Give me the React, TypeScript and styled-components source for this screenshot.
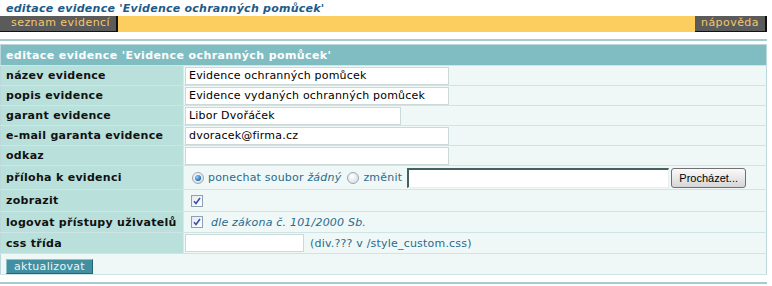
import React from 'react';
import styled, { createGlobalStyle } from 'styled-components';

const Global = createGlobalStyle`
  body {
    margin: 0;
    background: #fff;
    font-family: "DejaVu Sans", Verdana, sans-serif;
    font-size: 11px;
    letter-spacing: 0.2px;
  }
`;

const Page = styled.div`
  width: 767px;
`;

const PageTitle = styled.h1`
  margin: 0;
  height: 16px;
  padding: 2px 0 0 6px;
  box-sizing: border-box;
  font-size: 11px;
  line-height: 13px;
  font-weight: bold;
  font-style: italic;
  letter-spacing: 0.25px;
  color: #1c5a8a;
`;

const Toolbar = styled.div`
  display: flex;
  justify-content: space-between;
  height: 16px;
  background: #fccd5f;
`;

const ToolButton = styled.a<{ $pl?: number }>`
  display: block;
  box-sizing: border-box;
  height: 16px;
  padding: 0 6px 0 ${p => p.$pl ?? 6}px;
  background: #5b5b5b;
  color: #f3c86c;
  line-height: 14px;
  letter-spacing: 0.45px;
  border-right: 2px solid #111;
  border-bottom: 1px solid #111;
  cursor: pointer;
`;

const Rule = styled.div<{ $top: number }>`
  margin-top: ${p => p.$top}px;
  height: 2px;
  background: #a6ccd2;
`;

const Form = styled.table`
  margin-top: 3px;
  width: 767px;
  border-collapse: collapse;
  border: 1px solid #bcd7d9;
  table-layout: fixed;
`;

const HeadCell = styled.th`
  height: 20px;
  padding: 0 5px;
  background: #80bdc3;
  color: #fff;
  font-size: 11px;
  font-weight: bold;
  letter-spacing: 0.4px;
  text-align: left;
  border-bottom: 1px solid #cfe4e4;
`;

const Row = styled.tr<{ $h: number }>`
  height: ${p => p.$h}px;
`;

const Label = styled.td`
  width: 172px;
  padding: 0 5px;
  background: #bae0db;
  color: #111;
  font-weight: bold;
  letter-spacing: 0.3px;
  white-space: nowrap;
  border-bottom: 1px solid #cfe4e4;
  border-right: 1px solid #d6e9e8;
`;

const Value = styled.td<{ $pt?: number }>`
  padding: ${p => p.$pt ?? 0}px 0 0 1px;
  background: #eff8f6;
  color: #2a6b8e;
  border-bottom: 1px solid #cfe4e4;
  white-space: nowrap;
`;

const Field = styled.div`
  display: flex;
  align-items: center;
`;

const TextInput = styled.input<{ $w: number }>`
  box-sizing: border-box;
  width: ${p => p.$w}px;
  height: 18px;
  margin: 0;
  padding: 0 3px;
  border: 1px solid #cbd9d9;
  background: #fff;
  font-family: "DejaVu Sans", Verdana, sans-serif;
  font-size: 11px;
  letter-spacing: 0.2px;
  color: #000;
  outline: none;
`;

const FileText = styled.input`
  box-sizing: border-box;
  width: 262px;
  height: 20px;
  margin: 0 0 0 5px;
  padding: 0 3px;
  border: 1px solid #e6efef;
  border-top: 2px solid #44605f;
  border-left: 2px solid #44605f;
  background: #fff;
  outline: none;
`;

const Browse = styled.button`
  box-sizing: border-box;
  width: 75px;
  height: 20px;
  margin-left: 2px;
  padding: 0;
  border: 1px solid #707070;
  border-radius: 3px;
  background: linear-gradient(#fafafa, #e8e8e8 50%, #d6d6d6);
  font-family: "Liberation Sans", Arial, sans-serif;
  font-size: 11px;
  letter-spacing: 0;
  color: #000;
`;

const Radio = styled.span<{ $on?: boolean }>`
  display: inline-block;
  box-sizing: border-box;
  width: 12px;
  height: 12px;
  margin: 0 4px 0 ${p => (p.$on ? 7 : 6)}px;
  border-radius: 50%;
  border: 1px solid #9aa9b2;
  background: radial-gradient(circle at 40% 35%, #ffffff, #dde3e6 70%, #c5ccd0);
  position: relative;
  &::after {
    content: '';
    display: ${p => (p.$on ? 'block' : 'none')};
    position: absolute;
    left: 2px;
    top: 2px;
    width: 6px;
    height: 6px;
    border-radius: 50%;
    background: radial-gradient(circle at 35% 35%, #9fd3f5, #2a79c2 60%, #174d8a);
  }
`;

const Check = styled.span`
  display: inline-flex;
  align-items: center;
  justify-content: center;
  box-sizing: border-box;
  width: 12px;
  height: 12px;
  margin-left: 6px;
  border: 1px solid #8ea0b4;
  background: linear-gradient(135deg, #e6e9ee, #ffffff);
`;

const Note = styled.span<{ $ml?: number }>`
  margin-left: ${p => p.$ml ?? 0}px;
  color: #2a6b8e;
`;

const Em = styled.i`
  color: #2a6b8e;
`;

const Submit = styled.button`
  box-sizing: border-box;
  height: 15px;
  margin-left: 4px;
  padding: 0 7px;
  border: 1px solid #2b6574;
  border-top-color: #8ec2cc;
  border-left-color: #8ec2cc;
  background: #4190a2;
  color: #eaf5f5;
  font-family: "DejaVu Sans", Verdana, sans-serif;
  font-size: 11px;
  letter-spacing: 0.3px;
  line-height: 12px;
`;

const Tick = () => (
  <svg width="8" height="8" viewBox="0 0 8 8">
    <path d="M1 4.2 L3 6.5 L7 1" fill="none" stroke="#3450b8" strokeWidth="1.6" />
  </svg>
);

const fields: { label: string; value: string; w: number }[] = [
  { label: 'název evidence', value: 'Evidence ochranných pomůcek', w: 264 },
  { label: 'popis evidence', value: 'Evidence vydaných ochranných pomůcek', w: 264 },
  { label: 'garant evidence', value: 'Libor Dvořáček', w: 216 },
  { label: 'e-mail garanta evidence', value: 'dvoracek@firma.cz', w: 264 },
  { label: 'odkaz', value: '', w: 264 },
];

const App: React.FC = () => {
  return (
    <Page>
      <Global />
      <PageTitle>editace evidence 'Evidence ochranných pomůcek'</PageTitle>
      <Toolbar>
        <ToolButton $pl={11}>seznam evidencí</ToolButton>
        <ToolButton>nápověda</ToolButton>
      </Toolbar>
      <Rule $top={7} />
      <Form>
        <colgroup>
          <col style={{ width: 183 }} />
          <col />
        </colgroup>
        <tbody>
          <tr>
            <HeadCell colSpan={2}>editace evidence 'Evidence ochranných pomůcek'</HeadCell>
          </tr>
          {fields.map(f => (
            <Row $h={20} key={f.label}>
              <Label>{f.label}</Label>
              <Value>
                <Field>
                  <TextInput $w={f.w} defaultValue={f.value} />
                </Field>
              </Value>
            </Row>
          ))}
          <Row $h={24}>
            <Label>příloha k evidenci</Label>
            <Value>
              <Field>
                <Radio $on />
                <Note>
                  ponechat soubor <Em>žádný</Em>
                </Note>
                <Radio />
                <Note>změnit</Note>
                <FileText />
                <Browse>Procházet...</Browse>
              </Field>
            </Value>
          </Row>
          <Row $h={22}>
            <Label>zobrazit</Label>
            <Value>
              <Field>
                <Check>
                  <Tick />
                </Check>
              </Field>
            </Value>
          </Row>
          <Row $h={21}>
            <Label>logovat přístupy uživatelů</Label>
            <Value>
              <Field>
                <Check>
                  <Tick />
                </Check>
                <Note $ml={8}>
                  <Em>dle zákona č. 101/2000 Sb.</Em>
                </Note>
              </Field>
            </Value>
          </Row>
          <Row $h={21}>
            <Label>css třída</Label>
            <Value>
              <Field>
                <TextInput $w={119} defaultValue="" />
                <Note $ml={6}>(div.??? v /style_custom.css)</Note>
              </Field>
            </Value>
          </Row>
          <Row $h={21}>
            <Value colSpan={2} $pt={5}>
              <Submit>aktualizovat</Submit>
            </Value>
          </Row>
        </tbody>
      </Form>
      <Rule $top={7} />
    </Page>
  );
};

export default App;
